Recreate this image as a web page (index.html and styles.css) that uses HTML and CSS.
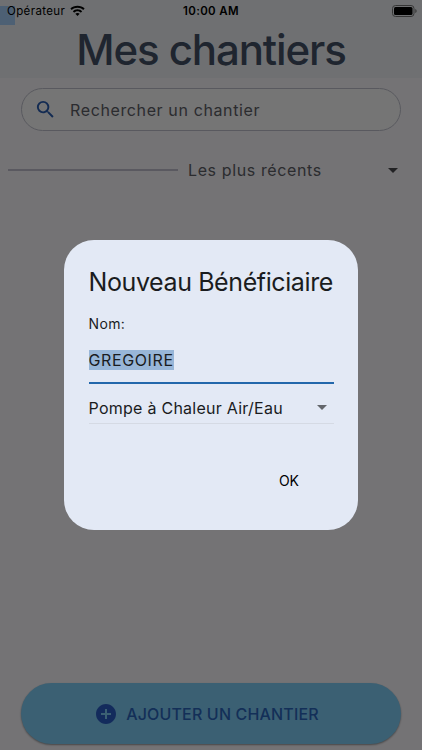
FILE: index.html
```
<!DOCTYPE html>
<html lang="fr">
<head>
  <meta charset="UTF-8">
  <meta name="viewport" content="width=device-width, initial-scale=1.0">
  <title>Mes chantiers</title>
  <link rel="stylesheet" href="styles.css">
</head>
<body>
  <div class="screen">
    <header class="header">
      <div class="status-bar">
        <div class="carrier">
          <span>Opérateur</span>
          <svg class="wifi" viewBox="0 0 16 12">
            <path d="M8 0.4C5 .4 2.3 1.5.4 3.4L1.9 5C3.5 3.400 5.600 2.500 8 2.500s4.500.9 6.100 2.500l1.500-1.600C13.700 1.500 11 .4 8 .4z"/>
            <path d="M8 4.200c-2 0-3.800.8-5 2.100l1.500 1.500C5.400 6.900 6.600 6.300 8 6.300s2.600.6 3.500 1.500L13 6.300c-1.200-1.300-3-2.100-5-2.100z"/>
            <path d="M8 8c-.9 0-1.700.4-2.300 1L8 11.400 10.300 9C9.700 8.400 8.900 8 8 8z"/>
          </svg>
        </div>
        <div class="time">10:00 AM</div>
        <div class="battery">
          <svg viewBox="0 0 25 12">
            <rect class="battery-case" x="0.500" y="0.500" width="21.500" height="11" rx="3"/>
            <rect x="2" y="2" width="18.500" height="8" rx="1.500"/>
            <path class="battery-tip" d="M23.300 4v4c.8-.3 1.300-1.100 1.300-2s-.5-1.700-1.300-2z"/>
          </svg>
        </div>
      </div>
      <h1 class="title">Mes chantiers</h1>
    </header>

    <main class="content">
      <div class="search">
        <svg class="search-icon" viewBox="0 0 24 24">
          <path d="M15.500 14h-.79l-.28-.27A6.471 6.471 0 0 0 16 9.500 6.500 6.500 0 1 0 9.500 16c1.610 0 3.090-.59 4.230-1.570l.27.28v.79l5 4.990L20.490 19l-4.990-5zm-6 0C7.010 14 5 11.990 5 9.500S7.010 5 9.500 5 14 7.010 14 9.500 11.990 14 9.500 14z"/>
        </svg>
        <span>Rechercher un chantier</span>
      </div>
      <div class="sort">
        <div class="sort-line"></div>
        <div class="sort-label">Les plus récents</div>
        <svg class="arrow" viewBox="0 0 10 5"><path d="M0 0l5 5 5-5z"/></svg>
      </div>
    </main>

    <div class="add-btn">
      <svg viewBox="0 0 24 24">
        <path d="M12 2C6.480 2 2 6.480 2 12s4.480 10 10 10 10-4.480 10-10S17.520 2 12 2zm5 11h-4v4h-2v-4H7v-2h4V7h2v4h4v2z"/>
      </svg>
      <span>AJOUTER UN CHANTIER</span>
    </div>
  </div>

  <div class="overlay">
    <div class="dialog">
      <h2 class="dialog-title">Nouveau Bénéficiaire</h2>
      <div class="field-label">Nom:</div>
      <div class="field"><span class="selected">GREGOIRE</span></div>
      <div class="select">
        <span>Pompe à Chaleur Air/Eau</span>
        <svg class="arrow" viewBox="0 0 10 5"><path d="M0 0l5 5 5-5z"/></svg>
      </div>
      <div class="actions"><span class="ok">OK</span></div>
    </div>
  </div>
</body>
</html>
```
FILE: styles.css
```
* {
  margin: 0;
  padding: 0;
  box-sizing: border-box;
}

body {
  font-family: Inter, sans-serif;
  width: 422px;
  height: 750px;
  overflow: hidden;
  color: #1a1c1e;
}

svg {
  display: block;
}

.screen {
  height: 750px;
  display: flex;
  flex-direction: column;
  background: #fdfbff;
}

/* header */
.header {
  height: 78px;
  background: linear-gradient(#a9d2fd, #a9d2fd) 0 6px / 15px 19px no-repeat #f2f5f9;
}

.status-bar {
  display: grid;
  grid-template-columns: 1fr auto 1fr;
  align-items: center;
  height: 22px;
  padding: 0 5px 0 7px;
  font-size: 11.5px;
  color: #000;
}

.carrier {
  display: flex;
  align-items: center;
  gap: 5px;
  letter-spacing: 0.38px;
}

.wifi {
  width: 15px;
  height: 12px;
}

.time {
  margin-right: 2px;
  font-weight: 600;
  letter-spacing: 0.35px;
}

.battery {
  justify-self: end;
}

.battery svg {
  width: 25px;
  height: 12px;
}

.battery-case {
  fill: none;
  stroke: #777;
}

.battery-tip {
  fill: #777;
}

.title {
  padding-top: 1px;
  text-align: center;
  font-size: 42px;
  font-weight: 500;
  line-height: 54px;
  letter-spacing: -1.1px;
  color: #445268;
}

/* search and sort */
.content {
  flex: 1;
  padding-top: 10px;
}

.search {
  display: flex;
  align-items: center;
  gap: 13px;
  height: 43px;
  margin: 0 21px;
  padding-left: 12px;
  border: 1px solid #c2c3cf;
  border-radius: 22px;
  background: #fefefe;
  font-size: 16px;
  letter-spacing: 0.62px;
  color: #5f6168;
}

.search-icon {
  width: 23px;
  height: 23px;
  fill: #2b5fb4;
}

.sort {
  display: flex;
  align-items: center;
  height: 40px;
  margin-top: 19px;
  padding: 0 24px 0 8px;
  font-size: 16px;
  letter-spacing: 0.62px;
  color: #5f6168;
}

.sort-line {
  width: 170px;
  height: 2px;
  margin-right: 10px;
  background: #c4c2d2;
}

.sort-label {
  flex: 1;
}

.arrow {
  width: 10px;
  height: 5px;
  fill: #4a4b50;
}

/* bottom button */
.add-btn {
  display: flex;
  align-items: center;
  justify-content: center;
  gap: 8px;
  height: 61px;
  margin: 0 21px 6px;
  padding-right: 9px;
  border-radius: 31px;
  background: #82d1fa;
  box-shadow: 0 1px 2px rgba(0, 0, 0, 0.4);
  font-size: 16px;
  font-weight: 500;
  letter-spacing: 0.17px;
  color: #2b68c0;
}

.add-btn svg {
  width: 24px;
  height: 24px;
  fill: #2b5fc8;
}

/* dialog */
.overlay {
  position: absolute;
  top: 0;
  left: 0;
  width: 422px;
  height: 750px;
  padding-top: 240px;
  background: rgba(0, 0, 0, 0.54);
}

.dialog {
  width: 294px;
  height: 290px;
  margin: 0 auto;
  padding: 25px 24.5px 0;
  border-radius: 30px;
  background: #e3e9f5;
}

.dialog-title {
  font-size: 25px;
  font-weight: 400;
  line-height: 34px;
  letter-spacing: -0.4px;
  white-space: nowrap;
}

.field-label {
  margin-top: 15px;
  font-size: 14px;
  line-height: 20px;
  letter-spacing: 0.35px;
}

.field {
  height: 50px;
  padding-top: 16px;
  border-bottom: 2px solid #2367ab;
  font-size: 16px;
  line-height: 20px;
  letter-spacing: 0.62px;
}

.selected {
  display: inline-block;
  background: #98b6d8;
}

.select {
  display: flex;
  align-items: center;
  justify-content: space-between;
  height: 40px;
  padding: 8px 7px 0 0;
  border-bottom: 1px solid #d5dae4;
  font-size: 16px;
  letter-spacing: 0.26px;
}

.select .arrow {
  fill: #63666b;
}

.actions {
  display: flex;
  justify-content: flex-end;
  margin-top: 46px;
  padding-right: 34.5px;
  font-size: 14px;
  line-height: 22px;
  color: #000;
}
```
